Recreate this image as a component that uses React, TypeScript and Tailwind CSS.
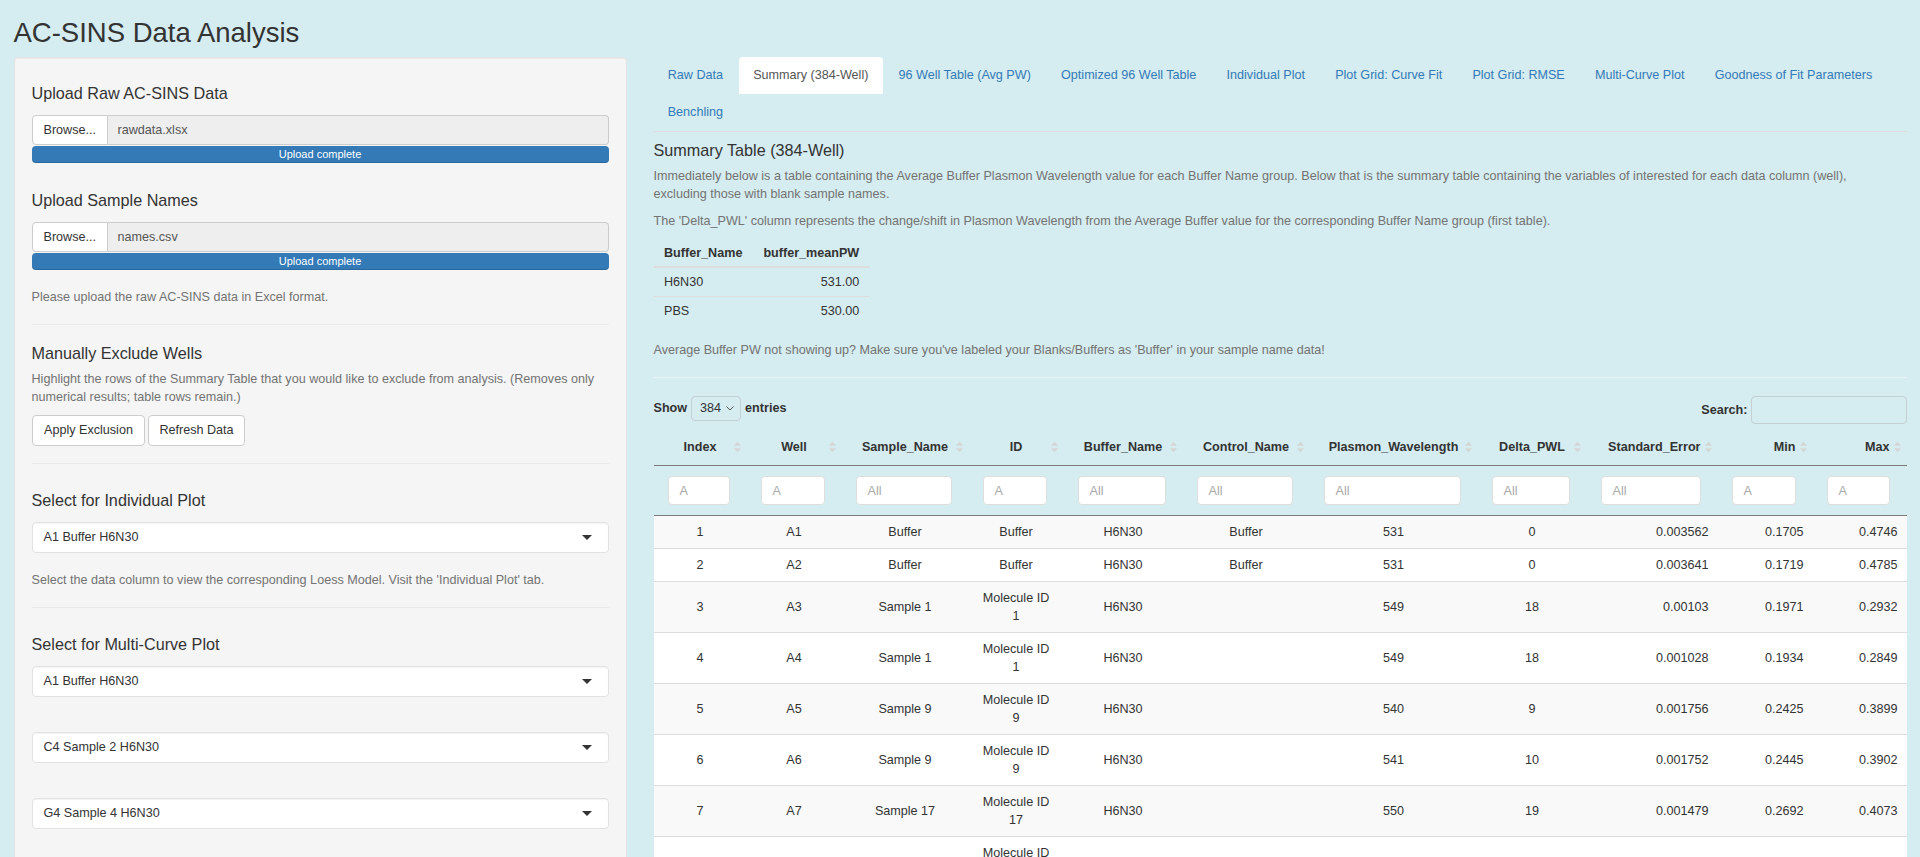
import React from "react";

type Col = {
  name: string;
  width: string;
  right?: boolean;
  ph: string;
};

const cols: Col[] = [
  { name: "Index", width: "w-[93px]", ph: "A" },
  { name: "Well", width: "w-[95px]", ph: "A" },
  { name: "Sample_Name", width: "w-[127px]", ph: "All" },
  { name: "ID", width: "w-[95px]", ph: "A" },
  { name: "Buffer_Name", width: "w-[119px]", ph: "All" },
  { name: "Control_Name", width: "w-[127px]", ph: "All" },
  { name: "Plasmon_Wavelength", width: "w-[168px]", ph: "All" },
  { name: "Delta_PWL", width: "w-[109px]", ph: "All" },
  { name: "Standard_Error", width: "w-[131px]", right: true, ph: "All" },
  { name: "Min", width: "w-[95px]", right: true, ph: "A" },
  { name: "Max", width: "w-[94px]", right: true, ph: "A" },
];

const rows: (string | null)[][] = [
  ["1", "A1", "Buffer", "Buffer", "H6N30", "Buffer", "531", "0", "0.003562", "0.1705", "0.4746"],
  ["2", "A2", "Buffer", "Buffer", "H6N30", "Buffer", "531", "0", "0.003641", "0.1719", "0.4785"],
  ["3", "A3", "Sample 1", "1", "H6N30", "", "549", "18", "0.00103", "0.1971", "0.2932"],
  ["4", "A4", "Sample 1", "1", "H6N30", "", "549", "18", "0.001028", "0.1934", "0.2849"],
  ["5", "A5", "Sample 9", "9", "H6N30", "", "540", "9", "0.001756", "0.2425", "0.3899"],
  ["6", "A6", "Sample 9", "9", "H6N30", "", "541", "10", "0.001752", "0.2445", "0.3902"],
  ["7", "A7", "Sample 17", "17", "H6N30", "", "550", "19", "0.001479", "0.2692", "0.4073"],
  ["8", "A8", "Sample 17", "17", "H6N30", "", "550", "19", "0.001481", "0.2688", "0.4069"],
];

const tabs = [
  "Raw Data",
  "Summary (384-Well)",
  "96 Well Table (Avg PW)",
  "Optimized 96 Well Table",
  "Individual Plot",
  "Plot Grid: Curve Fit",
  "Plot Grid: RMSE",
  "Multi-Curve Plot",
  "Goodness of Fit Parameters",
];

function SortIcon() {
  return (
    <svg
      width="7"
      height="11"
      viewBox="0 0 7 11"
      className="absolute right-[5.5px] top-1/2 -translate-y-1/2"
    >
      <path d="M3.5 0 L7 4.2 H0 Z" fill="#d6d6d6" />
      <path d="M3.5 11 L7 6.8 H0 Z" fill="#d6d6d6" />
    </svg>
  );
}

function FileInput({ file }: { file: string }) {
  return (
    <>
      <div className="mt-[13px] flex h-[30px]">
        <div className="flex w-[76px] items-center rounded-l-[4px] border border-[#ccc] bg-white pl-[11px] text-[#333]">
          Browse...
        </div>
        <div className="flex flex-1 items-center rounded-r-[4px] border border-l-0 border-[#ccc] bg-[#eee] pl-[10px] text-[#555]">
          {file}
        </div>
      </div>
      <div className="mt-[1px] h-[17px] rounded-[4px] bg-[#337ab7] text-center text-[11px] leading-[17px] text-white shadow-[inset_0_-1px_0_rgba(0,0,0,0.15)]">
        Upload complete
      </div>
    </>
  );
}

function Selectize({ value, mt }: { value: string; mt: string }) {
  return (
    <div
      className={`${mt} flex h-[31px] items-center justify-between rounded-[4px] border border-[#e2e2e2] bg-white pl-[11px] pr-[16px] text-[#333] shadow-[inset_0_1px_1px_rgba(0,0,0,0.05)]`}
    >
      <span>{value}</span>
      <span className="h-0 w-0 border-x-[5px] border-t-[5px] border-x-transparent border-t-[#333]" />
    </div>
  );
}

function H4({ children, mt }: { children: React.ReactNode; mt: string }) {
  return <h4 className={`${mt} text-[16.2px] font-medium leading-[18px] text-[#333]`}>{children}</h4>;
}

function Sidebar() {
  return (
    <div className="rounded-[4px] border border-[#e3e3e3] bg-[#f5f5f5] px-[17px] pb-[60px] pt-[17px] shadow-[inset_0_1px_1px_rgba(0,0,0,0.05)]">
      <H4 mt="mt-[9px]">Upload Raw AC-SINS Data</H4>
      <FileInput file="rawdata.xlsx" />
      <H4 mt="mt-[28px]">Upload Sample Names</H4>
      <FileInput file="names.csv" />
      <p className="mt-[18px] text-[#737373]">Please upload the raw AC-SINS data in Excel format.</p>
      <hr className="mt-[18px] border-t border-[#e9e9e9]" />

      <H4 mt="mt-[19px]">Manually Exclude Wells</H4>
      <p className="mt-[8px] text-[#737373]">
        Highlight the rows of the Summary Table that you would like to exclude from analysis. (Removes only
        <br />
        numerical results; table rows remain.)
      </p>
      <div className="mt-[9px] flex gap-[3px]">
        <button className="h-[31px] rounded-[4px] border border-[#ccc] bg-white px-[11.5px] text-[#333]">
          Apply Exclusion
        </button>
        <button className="h-[31px] rounded-[4px] border border-[#ccc] bg-white px-[10px] text-[#333]">
          Refresh Data
        </button>
      </div>
      <hr className="mt-[17px] border-t border-[#e9e9e9]" />

      <H4 mt="mt-[27px]">Select for Individual Plot</H4>
      <Selectize value="A1 Buffer H6N30" mt="mt-[13px]" />
      <p className="mt-[18px] text-[#737373]">
        Select the data column to view the corresponding Loess Model. Visit the 'Individual Plot' tab.
      </p>
      <hr className="mt-[18px] border-t border-[#e9e9e9]" />

      <H4 mt="mt-[27px]">Select for Multi-Curve Plot</H4>
      <Selectize value="A1 Buffer H6N30" mt="mt-[13px]" />
      <Selectize value="C4 Sample 2 H6N30" mt="mt-[35px]" />
      <Selectize value="G4 Sample 4 H6N30" mt="mt-[35px]" />
    </div>
  );
}

function Tabs() {
  return (
    <ul className="flex flex-wrap border-b border-[#ddd]">
      {tabs.map((t) => {
        const active = t === "Summary (384-Well)";
        return (
          <li
            key={t}
            className={`mr-[1.8px] flex h-[37px] items-center rounded-t-[4px] px-[14.2px] ${
              active ? "bg-white text-[#555]" : "text-[#337ab7]"
            }`}
          >
            {t}
          </li>
        );
      })}
      <li className="h-0 basis-full" />
      <li className="flex h-[37px] items-center px-[14.2px] text-[#337ab7]">Benchling</li>
    </ul>
  );
}

function DataTable() {
  return (
    <div className="mt-[18px]">
      <div className="flex items-start justify-between">
        <div className="flex h-[25px] items-center font-bold text-[#333]">
          <span>Show</span>
          <div className="ml-[4px] flex h-[25px] w-[50px] items-center justify-between rounded-[4px] border border-[#c4cfd2] pl-[8px] pr-[6px] font-normal">
            <span>384</span>
            <svg width="8" height="5" viewBox="0 0 8 5">
              <path d="M0.5 0.5 L4 4 L7.5 0.5" fill="none" stroke="#555" strokeWidth="1" />
            </svg>
          </div>
          <span className="ml-[4px]">entries</span>
        </div>
        <div className="flex items-center font-bold text-[#333]">
          <span>Search:</span>
          <div className="ml-[3px] h-[28px] w-[156px] rounded-[4px] border border-[#c4cfd2]" />
        </div>
      </div>

      <table className="mt-[5.5px] w-full table-fixed border-collapse">
        <colgroup>
          {cols.map((c) => (
            <col key={c.name} className={c.width} />
          ))}
        </colgroup>
        <thead>
          <tr>
            {cols.map((c) => (
              <th
                key={c.name}
                className={`relative border-b border-[#7a7a7a] py-[9px] font-bold leading-[18px] text-[#333] ${
                  c.right ? "pl-[9px] pr-[17px] text-right" : "px-[13px] text-center"
                }`}
              >
                {c.name}
                <SortIcon />
              </th>
            ))}
          </tr>
          <tr>
            {cols.map((c) => (
              <td key={c.name} className="border-b border-[#7a7a7a] py-[10px] pl-[14px] pr-[17px]">
                <div className="flex h-[29px] w-full items-center rounded-[4px] border border-[#dedede] bg-white pl-[11px] text-[#aaa]">
                  {c.ph}
                </div>
              </td>
            ))}
          </tr>
        </thead>
        <tbody>
          {rows.map((r, i) => (
            <tr
              key={i}
              className={`${i % 2 === 0 ? "bg-[#f9f9f9]" : "bg-white"} ${i > 0 ? "border-t border-[#ddd]" : ""}`}
            >
              {r.map((v, j) => (
                <td
                  key={j}
                  className={`px-[9px] py-[7px] leading-[18px] text-[#333] ${
                    cols[j].right ? "text-right" : "text-center"
                  }`}
                >
                  {j === 3 && i > 1 ? (
                    <>
                      Molecule ID
                      <br />
                      {v}
                    </>
                  ) : (
                    v
                  )}
                </td>
              ))}
            </tr>
          ))}
        </tbody>
      </table>
    </div>
  );
}

function MainPanel() {
  return (
    <div>
      <Tabs />
      <h4 className="mt-[9px] text-[16.2px] font-medium leading-[18px] text-[#333]">Summary Table (384-Well)</h4>
      <p className="mt-[8px] text-[#737373]">
        Immediately below is a table containing the Average Buffer Plasmon Wavelength value for each Buffer Name
        group. Below that is the summary table containing the variables of interested for each data column (well),
        <br />
        excluding those with blank sample names.
      </p>
      <p className="mt-[9px] text-[#737373]">
        The 'Delta_PWL' column represents the change/shift in Plasmon Wavelength from the Average Buffer value for
        the corresponding Buffer Name group (first table).
      </p>
      <table className="mt-[10px] border-collapse text-[#333]">
        <thead>
          <tr>
            <th className="border-b-2 border-[#ddd] px-[10.5px] py-[4px] text-left font-bold leading-[18px]">
              Buffer_Name
            </th>
            <th className="border-b-2 border-[#ddd] px-[10.5px] py-[4px] text-right font-bold leading-[18px]">
              buffer_meanPW
            </th>
          </tr>
        </thead>
        <tbody>
          <tr>
            <td className="px-[10.5px] py-[5px] leading-[18px]">H6N30</td>
            <td className="px-[10.5px] py-[5px] text-right leading-[18px]">531.00</td>
          </tr>
          <tr className="border-t border-[#ddd]">
            <td className="px-[10.5px] py-[5px] leading-[18px]">PBS</td>
            <td className="px-[10.5px] py-[5px] text-right leading-[18px]">530.00</td>
          </tr>
        </tbody>
      </table>
      <p className="mt-[16px] text-[#737373]">
        Average Buffer PW not showing up? Make sure you've labeled your Blanks/Buffers as 'Buffer' in your sample
        name data!
      </p>
      <hr className="mt-[18px] border-t border-[#eaf2f3]" />
      <DataTable />
    </div>
  );
}

export default function App() {
  return (
    <div className="min-h-screen bg-[#d5ecf0] font-['Liberation_Sans',Arial,Helvetica,sans-serif] text-[12.6px] leading-[18px] text-[#333]">
      <h2 className="mb-[9px] px-[13.5px] pt-[18px] text-[27.5px] font-medium leading-[29.7px] text-[#333]">
        AC-SINS Data Analysis
      </h2>
      <div className="grid grid-cols-[640px_1fr]">
        <div className="px-[13.5px]">
          <Sidebar />
        </div>
        <div className="px-[13.5px]">
          <MainPanel />
        </div>
      </div>
    </div>
  );
}
